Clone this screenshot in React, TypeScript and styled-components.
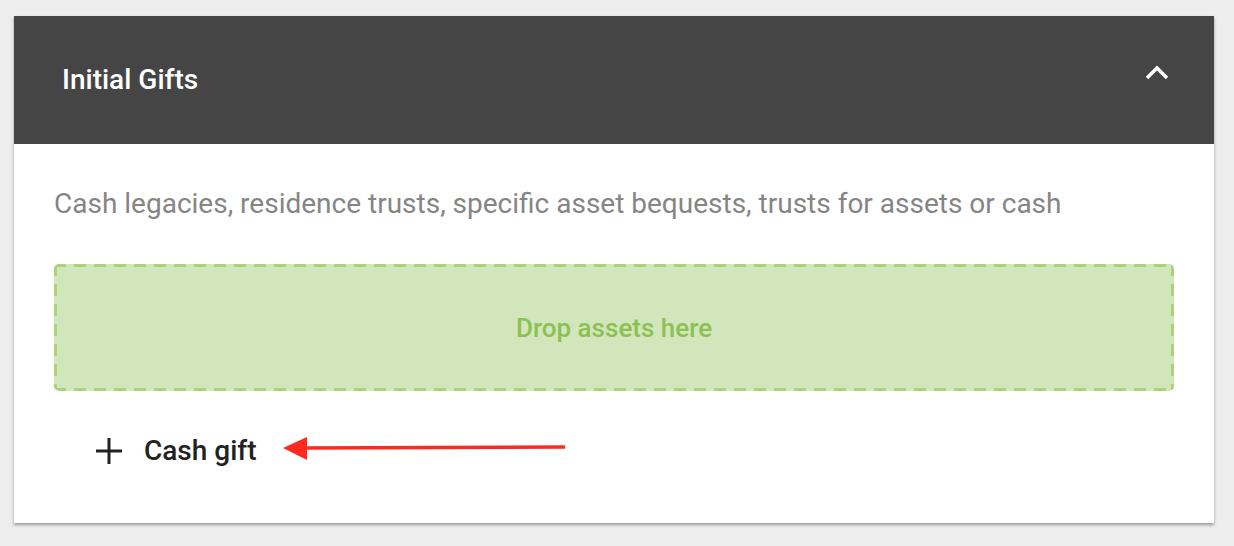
import React from 'react';
import styled, { createGlobalStyle } from 'styled-components';

const Global = createGlobalStyle`
  html, body {
    margin: 0;
    padding: 0;
    background: #ededed;
    font-family: Roboto, 'Liberation Sans', Arial, sans-serif;
  }
`;

const Page = styled.div`
  padding: 16px 20px 23px 14px;
`;

const Card = styled.section`
  background: #fff;
  box-shadow: 0 2px 3px rgba(0, 0, 0, 0.35);
`;

const Header = styled.header`
  height: 128px;
  background: #454545;
  display: flex;
  align-items: center;
  justify-content: space-between;
  padding: 0 44px 0 48px;
  box-sizing: border-box;
  color: #fff;
`;

const Title = styled.h2`
  margin: 0;
  font-size: 28px;
  line-height: 32px;
  font-weight: 500;
`;

const Toggle = styled.button`
  background: none;
  border: 0;
  padding: 0;
  display: flex;
  color: #fff;
  cursor: pointer;
  margin-top: -14px;
`;

const Body = styled.div`
  padding: 44px 40px 56px 40px;
`;

const Description = styled.p`
  margin: 0 0 44px;
  color: #858585;
  font-size: 28px;
  line-height: 32px;
`;

// dash pattern drawn with gradients: 12px dash, 8px gap, 3px thick
const dashX = 'repeating-linear-gradient(90deg, #abd37a 0 12px, transparent 12px 20px)';
const dashY = 'repeating-linear-gradient(180deg, #abd37a 0 12px, transparent 12px 20px)';

const DropZone = styled.div`
  height: 127px;
  box-sizing: border-box;
  border-radius: 5px;
  background:
    ${dashX} left top / 100% 3px no-repeat,
    ${dashX} left bottom / 100% 3px no-repeat,
    ${dashY} left top / 3px 100% no-repeat,
    ${dashY} right top / 3px 100% no-repeat,
    #d2e6bc;
  display: flex;
  align-items: center;
  justify-content: center;
  color: #8cc152;
  font-size: 26px;
  font-weight: 500;
`;

const ActionRow = styled.div`
  display: flex;
  align-items: center;
  margin-top: 44px;
  padding-left: 40px;
`;

const AddButton = styled.button`
  display: flex;
  align-items: center;
  gap: 20px;
  background: none;
  border: 0;
  padding: 0;
  color: #222;
  font-family: inherit;
  font-size: 28px;
  line-height: 32px;
  font-weight: 500;
  cursor: pointer;
`;

const Pointer = styled.svg`
  margin-left: 26px;
  margin-top: -6px;
`;

const App: React.FC = () => {
  return (
    <Page>
      <Global />
      <Card>
        <Header>
          <Title>Initial Gifts</Title>
          <Toggle aria-label="Collapse">
            <svg width="26" height="16" viewBox="0 0 26 16">
              <path d="M3 13 L13 3 L23 13" fill="none" stroke="#fff" strokeWidth="3.4" />
            </svg>
          </Toggle>
        </Header>
        <Body>
          <Description>
            Cash legacies, residence trusts, specific asset bequests, trusts for assets or cash
          </Description>
          <DropZone>Drop assets here</DropZone>
          <ActionRow>
            <AddButton>
              <svg width="30" height="30" viewBox="0 0 30 30">
                <path d="M15 2 V28 M2 15 H28" stroke="#222" strokeWidth="3" />
              </svg>
              Cash gift
            </AddButton>
            <Pointer width="284" height="28" viewBox="0 0 284 28">
              <path d="M20 14 L282 13" stroke="#ff2a1f" strokeWidth="3.5" />
              <path d="M0 14 L24 3 L24 26 Z" fill="#ff2a1f" />
            </Pointer>
          </ActionRow>
        </Body>
      </Card>
    </Page>
  );
};

export default App;
